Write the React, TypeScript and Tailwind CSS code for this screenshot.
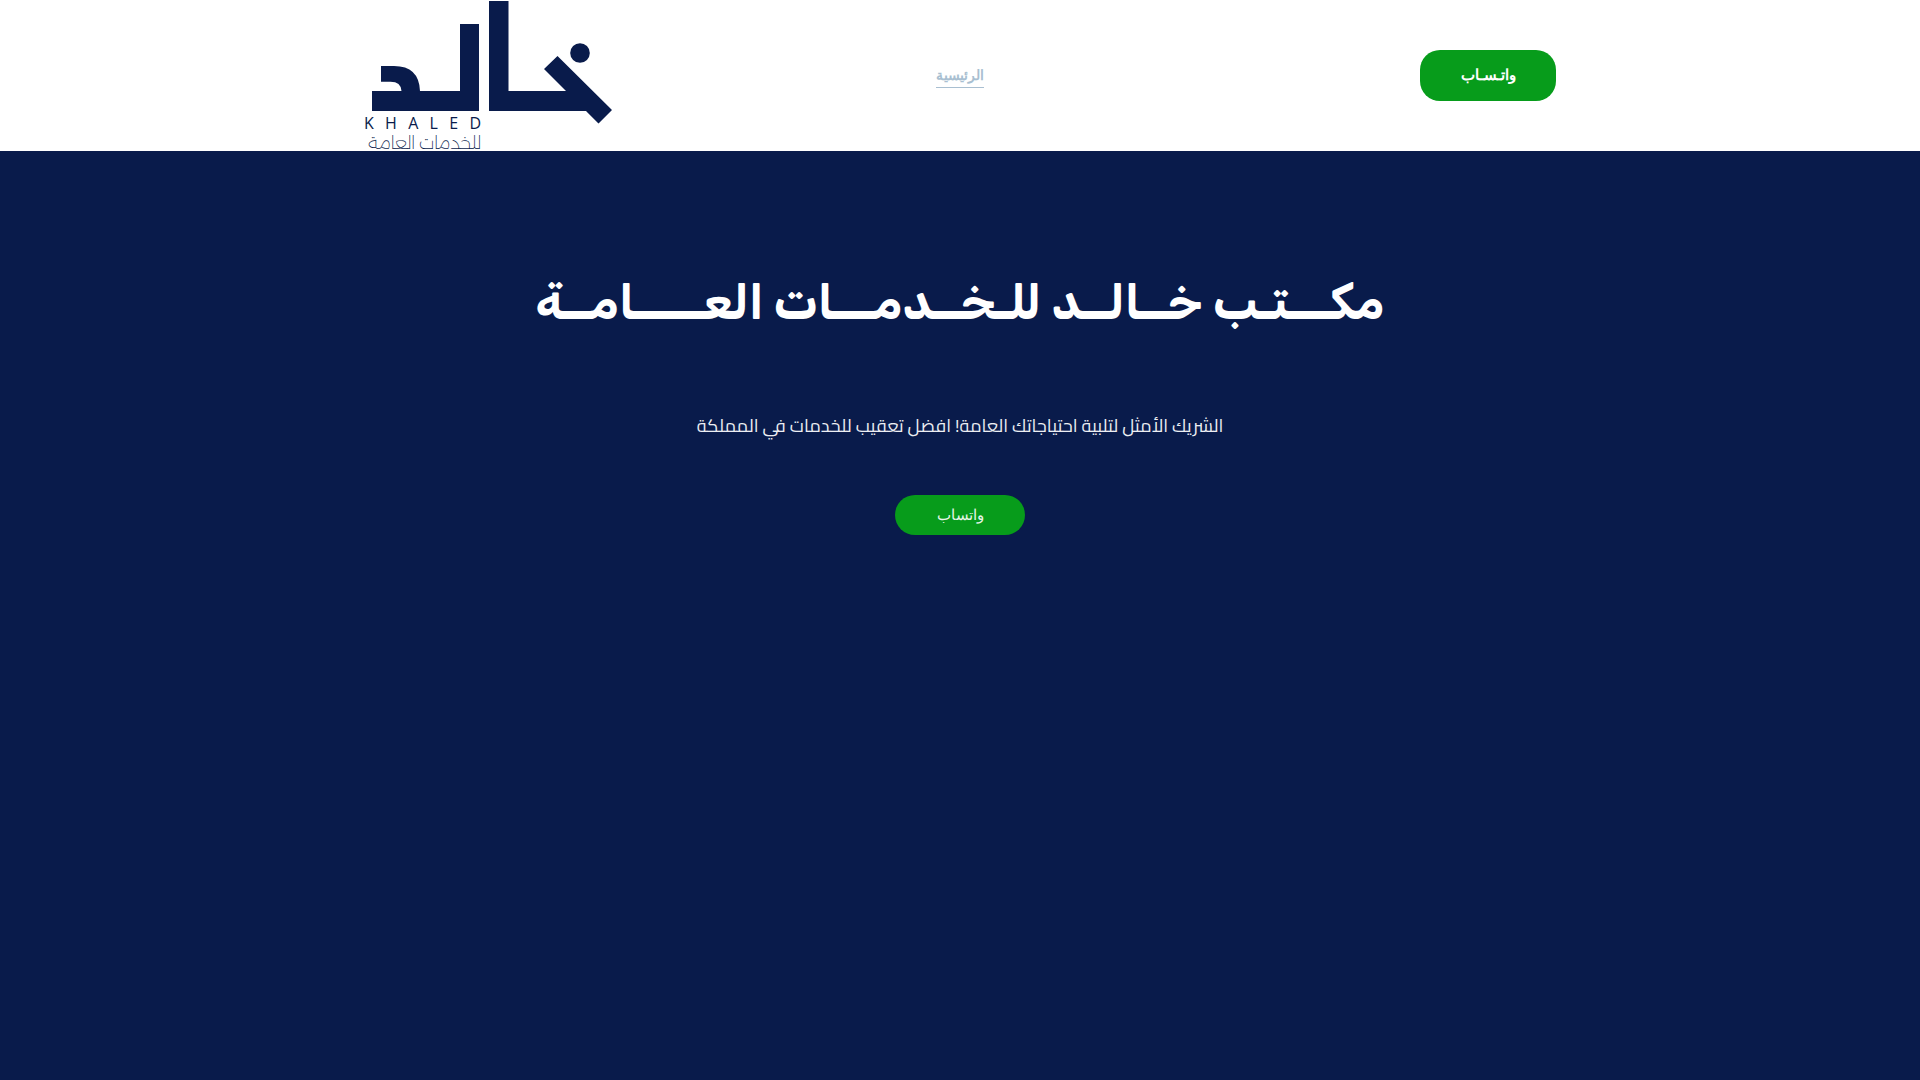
const LETTERS = ['K', 'H', 'A', 'L', 'E', 'D'];

function Logo() {
  return (
    <a href="#" dir="ltr" className="block h-[151px] w-[248px] text-[#091b4b]">
      <svg viewBox="0 0 248 114" className="block h-[114px] w-full overflow-visible" fill="currentColor" role="img" aria-label="خالد">
        <path d="M125 1h19.500v90h57.500l-22-22 13.500-13 54.500 54-13.500 13.500-12.500-12.500H125z" />
        <path d="M96 24h19v87H8V91h29.500q-.5-9.300-11-9.300H17V66h13q25 0 26 25h40z" />
        <circle cx="216" cy="53" r="9.800" />
      </svg>
      <span className="flex w-[117px] justify-between font-['Open_Sans'] text-[16px] leading-[18px]">
        {LETTERS.map((letter) => (
          <span key={letter}>{letter}</span>
        ))}
      </span>
      <span dir="rtl" className="block w-[117px] whitespace-nowrap font-['Alexandria','Noto_Sans',sans-serif] text-[18px] leading-[22px] font-extralight">
        للخدمات العامة
      </span>
    </a>
  );
}

export default function App() {
  return (
    <div dir="rtl" className="min-h-screen bg-[#091b4b] font-['Open_Sans',sans-serif]">
      <header className="bg-white">
        <div className="mx-auto grid max-w-[1192px] grid-cols-3 items-center">
          <div>
            <a href="#" className="inline-flex h-[51px] w-[136px] items-center justify-center rounded-[20px] bg-[#079c1b] pb-[2px] text-[15px] font-bold text-white">
              واتـسـاب
            </a>
          </div>
          <nav className="flex justify-center">
            <a href="#" className="border-b border-[#a9bfd1] text-[14px] leading-[24px] font-bold text-[#a9bfd1]">
              الرئيسية
            </a>
          </nav>
          <div className="flex justify-end">
            <Logo />
          </div>
        </div>
      </header>
      <main className="flex flex-col items-center px-6 pt-[116px] text-center text-white">
        <h1 className="font-['Rubik','Open_Sans',sans-serif] text-[48px] leading-[72px] font-bold">مكـــتـب خــالــد للـخــدمـــات العـــــامــة</h1>
        <p className="mt-[69px] font-['Cairo','Open_Sans',sans-serif] text-[18px] leading-[36px] text-[#eceef2]">
          الشريك الأمثل لتلبية احتياجاتك العامة! افضل تعقيب للخدمات في المملكة
        </p>
        <a href="#" className="mt-[51px] flex h-[40px] w-[130px] items-center justify-center rounded-[20px] bg-[#079c1b] pb-[2px] text-[15px] text-[#e6f5e8]">
          واتساب
        </a>
      </main>
    </div>
  );
}
